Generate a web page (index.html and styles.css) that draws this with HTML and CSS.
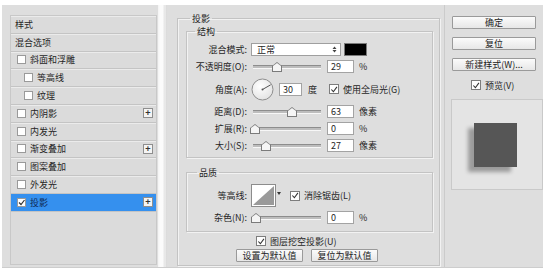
FILE: index.html
```html
<!DOCTYPE html>
<html>

<head>
    <meta charset="UTF-8">
    <title>图层样式 - 投影</title>
    <link rel="stylesheet" href="styles.css">
</head>

<body>
    <div class="dialog">
        <div class="side">
            <ul class="style-list">
                <li class="head">样式</li>
                <li class="head">混合选项</li>
                <li><span class="cb"></span>斜面和浮雕</li>
                <li class="sub"><span class="cb"></span>等高线</li>
                <li class="sub"><span class="cb"></span>纹理</li>
                <li><span class="cb"></span>内阴影<span class="plus">+</span></li>
                <li><span class="cb"></span>内发光</li>
                <li><span class="cb"></span>渐变叠加<span class="plus">+</span></li>
                <li><span class="cb"></span>图案叠加</li>
                <li><span class="cb"></span>外发光</li>
                <li class="active"><span class="cb on"><svg width="7" height="7" viewBox="0 0 7 7"><polyline points="1,3.5 3,5.5 6.5,1" fill="none" stroke="#333" stroke-width="1.2"/></svg></span>投影<span class="plus">+</span></li>
            </ul>
            <div class="scroll"></div>
        </div>

        <div class="main">
            <fieldset class="group outer">
                <legend>投影</legend>

                <fieldset class="group">
                    <legend>结构</legend>
                    <div class="row">
                        <span class="lbl">混合模式:</span>
                        <div class="select">
                            <span>正常</span>
                            <svg width="5" height="7" viewBox="0 0 5 7"><path d="M0.5 3 L2.5 0.5 L4.5 3 Z M0.5 4 L2.5 6.5 L4.5 4 Z" fill="#444"/></svg>
                        </div>
                        <span class="swatch"></span>
                    </div>
                    <div class="row">
                        <span class="lbl">不透明度(O):</span>
                        <div class="slider"><span class="thumb" style="left: 19px"></span></div>
                        <span class="num">29</span>
                        <span class="unit">%</span>
                    </div>
                    <div class="row tall">
                        <span class="lbl">角度(A):</span>
                        <svg class="dial" width="23" height="23" viewBox="0 0 23 23">
                            <defs>
                                <radialGradient id="dialfill" cx="40%" cy="35%" r="70%">
                                    <stop offset="0" stop-color="#ffffff"/>
                                    <stop offset="1" stop-color="#e2e2e2"/>
                                </radialGradient>
                            </defs>
                            <circle cx="11.5" cy="11.5" r="10.5" fill="url(#dialfill)" stroke="#8e8e8e" stroke-width="1"/>
                            <line x1="11.5" y1="11.5" x2="19.7" y2="6.8" stroke="#555" stroke-width="1"/>
                            <circle cx="11.5" cy="11.5" r="1" fill="#555"/>
                        </svg>
                        <span class="num angle">30</span>
                        <span class="unit deg">度</span>
                        <span class="cb on big"><svg width="9" height="9" viewBox="0 0 9 9"><polyline points="1.5,4.5 3.8,7 7.8,1.5" fill="none" stroke="#333" stroke-width="1.2"/></svg></span>
                        <span class="cb-text">使用全局光(G)</span>
                    </div>
                    <div class="row">
                        <span class="lbl">距离(D):</span>
                        <div class="slider"><span class="thumb" style="left: 34px"></span></div>
                        <span class="num">63</span>
                        <span class="unit">像素</span>
                    </div>
                    <div class="row">
                        <span class="lbl">扩展(R):</span>
                        <div class="slider"><span class="thumb" style="left: -3px"></span></div>
                        <span class="num">0</span>
                        <span class="unit">%</span>
                    </div>
                    <div class="row">
                        <span class="lbl">大小(S):</span>
                        <div class="slider"><span class="thumb" style="left: 8px"></span></div>
                        <span class="num">27</span>
                        <span class="unit">像素</span>
                    </div>
                </fieldset>

                <fieldset class="group quality">
                    <legend>品质</legend>
                    <div class="row contour-row">
                        <span class="lbl">等高线:</span>
                        <svg class="contour" width="25" height="23" viewBox="0 0 25 23">
                            <rect x="0.5" y="0.5" width="24" height="22" fill="#fff" stroke="#8c8c8c"/>
                            <polygon points="2,21 23,2 23,21" fill="#9a9a9a"/>
                        </svg>
                        <svg class="drop" width="4" height="3" viewBox="0 0 4 3"><path d="M0 0 H4 L2 3 Z" fill="#333"/></svg>
                        <span class="cb on big aa"><svg width="9" height="9" viewBox="0 0 9 9"><polyline points="1.5,4.5 3.8,7 7.8,1.5" fill="none" stroke="#333" stroke-width="1.2"/></svg></span>
                        <span class="cb-text">消除锯齿(L)</span>
                    </div>
                    <div class="row">
                        <span class="lbl">杂色(N):</span>
                        <div class="slider"><span class="thumb" style="left: -2px"></span></div>
                        <span class="num">0</span>
                        <span class="unit">%</span>
                    </div>
                </fieldset>

                <div class="knockout">
                    <span class="cb on big"><svg width="9" height="9" viewBox="0 0 9 9"><polyline points="1.5,4.5 3.8,7 7.8,1.5" fill="none" stroke="#333" stroke-width="1.2"/></svg></span>
                    <span class="cb-text">图层挖空投影(U)</span>
                </div>
                <div class="defaults">
                    <button class="btn">设置为默认值</button>
                    <button class="btn">复位为默认值</button>
                </div>
            </fieldset>
        </div>

        <div class="actions">
            <button class="btn wide">确定</button>
            <button class="btn wide">复位</button>
            <button class="btn wide">新建样式(W)...</button>
            <div class="preview-check">
                <span class="cb on big"><svg width="9" height="9" viewBox="0 0 9 9"><polyline points="1.5,4.5 3.8,7 7.8,1.5" fill="none" stroke="#333" stroke-width="1.2"/></svg></span>
                <span class="cb-text">预览(V)</span>
            </div>
            <div class="preview">
                <div class="sample"></div>
            </div>
        </div>
    </div>
</body>

</html>
```

FILE: styles.css
```css
body {
    margin: 0;
    background-color: #ffffff;
    font-family: "Noto Sans CJK SC", "Noto Sans", sans-serif;
    font-size: 9px;
    color: #262626;
}

.dialog {
    display: flex;
    margin: 5px 0 0 2px;
    width: 541px;
    height: 262px;
    background-color: #dedede;
    border-bottom: 1px solid #cdcdcd;
    overflow: hidden;
}

/* left: list of layer effects */
.side {
    display: flex;
    padding-left: 8px;
}

.style-list {
    list-style: none;
    margin: 10px 0 0 0;
    padding: 0;
    width: 147px;
    height: 250px;
    box-sizing: border-box;
    background-color: #dbdbdb;
    border: 1px solid #c8c8c8;
}

.style-list li {
    display: flex;
    align-items: center;
    height: 17.8px;
    box-sizing: border-box;
    padding-left: 6px;
    border-bottom: 1px solid #c4c4c4;
    box-shadow: inset 0 1px 0 #ebebeb;
}

.style-list li.head {
    padding-left: 4px;
}

.style-list li.sub {
    padding-left: 13px;
}

.style-list li.active {
    background-color: #3590ee;
    box-shadow: none;
    color: #0f2a55;
}

.cb {
    display: inline-flex;
    align-items: center;
    justify-content: center;
    width: 7px;
    height: 7px;
    margin-right: 4px;
    background-color: #ffffff;
    border: 1px solid #9a9a9a;
    flex-shrink: 0;
}

.cb.big {
    width: 8px;
    height: 8px;
    border-color: #7d7d7d;
}

.plus {
    margin-left: auto;
    margin-right: 3px;
    width: 8px;
    height: 8px;
    line-height: 8px;
    text-align: center;
    font-size: 9px;
    font-weight: bold;
    color: #333;
    background-color: #f4f4f4;
    border: 1px solid #8e8e8e;
}

.scroll {
    width: 9px;
    height: 100%;
    margin-left: 1px;
    background: linear-gradient(to right, #f3f3f3 0, #fbfbfb 2px, #fbfbfb 5px, #e8e8e8 6px, #e8e8e8 8px, #cfcfcf 9px);
}

/* middle: settings */
.main {
    width: 278px;
    padding: 7px 0 0 10px;
    box-sizing: border-box;
    border-right: 1px solid #cbcbcb;
}

.group {
    margin: 0;
    padding: 0;
    border: 1px solid #c3c3c3;
    box-shadow: 1px 1px 0 #f2f2f2, inset 1px 1px 0 #f2f2f2;
}

.group legend {
    margin-left: 8px;
    padding: 0 2px;
    line-height: 13px;
    color: #222;
}

.outer {
    width: 263px;
    height: 254px;
    box-sizing: border-box;
    padding: 0 6px 0 8px;
}

.outer > legend {
    margin-left: 4px;
}

.outer > .group {
    padding: 3px 0 3px 0;
}

.outer > .quality {
    margin-top: 8px;
    padding-bottom: 5px;
}

.quality legend {
    margin-left: 10px;
}

.row {
    display: flex;
    align-items: center;
    height: 17px;
}

.row.tall {
    height: 28px;
}

.row.contour-row {
    height: 27px;
}

.lbl {
    width: 60px;
    margin-right: 4px;
    text-align: right;
    white-space: nowrap;
}

.select {
    display: flex;
    align-items: center;
    justify-content: space-between;
    width: 90px;
    height: 13px;
    box-sizing: border-box;
    padding: 0 3px 0 5px;
    background-color: #ffffff;
    border: 1px solid #9f9f9f;
}

.swatch {
    width: 23px;
    height: 13px;
    margin-left: 3px;
    box-sizing: border-box;
    background-color: #000000;
    border: 1px solid #7a7a7a;
}

.slider {
    position: relative;
    width: 68px;
    height: 2px;
    margin-left: 2px;
    background-color: #bdbdbd;
    border-top: 1px solid #8d8d8d;
    border-bottom: 1px solid #f7f7f7;
}

.thumb {
    position: absolute;
    top: 0;
    width: 8px;
    height: 5px;
    background-color: #f5f5f5;
    border: 1px solid #7b7b7b;
    border-top: none;
}

.thumb::before {
    content: "";
    position: absolute;
    left: -1px;
    top: -4px;
    border-left: 5px solid transparent;
    border-right: 5px solid transparent;
    border-bottom: 4px solid #7b7b7b;
}

.thumb::after {
    content: "";
    position: absolute;
    left: 0;
    top: -3px;
    border-left: 4px solid transparent;
    border-right: 4px solid transparent;
    border-bottom: 3px solid #f5f5f5;
}

.num {
    width: 27px;
    height: 13px;
    margin-left: 6px;
    box-sizing: border-box;
    padding-left: 3px;
    line-height: 11px;
    background-color: #ffffff;
    border: 1px solid #a3a3a3;
}

.num.angle {
    width: 23px;
    margin-left: 5px;
}

.unit {
    margin-left: 5px;
}

.unit.deg {
    margin-left: 6px;
}

.row.tall .cb {
    margin-left: 12px;
}

.cb-text {
    white-space: nowrap;
}

.dial {
    display: block;
}

.contour {
    display: block;
}

.drop {
    margin-left: 1px;
    align-self: flex-start;
    margin-top: 10px;
}

.cb.aa {
    margin-left: 9px;
}

.knockout {
    display: flex;
    align-items: center;
    height: 14px;
    margin: 2px 0 0 70px;
}

.defaults {
    display: flex;
    gap: 8px;
    margin: 1px 0 0 50px;
}

.btn {
    height: 13px;
    padding: 0;
    font-family: inherit;
    font-size: 9px;
    line-height: 11px;
    color: #222;
    background: linear-gradient(#fbfbfb, #e7e7e7);
    border: 1px solid #9a9a9a;
    border-radius: 1px;
}

.defaults .btn {
    width: 67px;
}

/* right: buttons and preview */
.actions {
    display: flex;
    flex-direction: column;
    padding: 11px 0 0 7px;
}

.btn.wide {
    width: 84px;
    margin-bottom: 8px;
}

.preview-check {
    display: flex;
    align-items: center;
    height: 12px;
    margin: 0 0 0 19px;
}

.preview {
    width: 92px;
    height: 91px;
    margin: 8px 0 0 -1px;
    box-sizing: border-box;
    background-color: #e4e4e4;
    border: 1px solid #c9c9c9;
    padding: 23px 0 0 22px;
}

.sample {
    width: 43px;
    height: 44px;
    background-color: #565656;
    box-shadow: -6px 5px 4px rgba(0, 0, 0, 0.32);
}
```
